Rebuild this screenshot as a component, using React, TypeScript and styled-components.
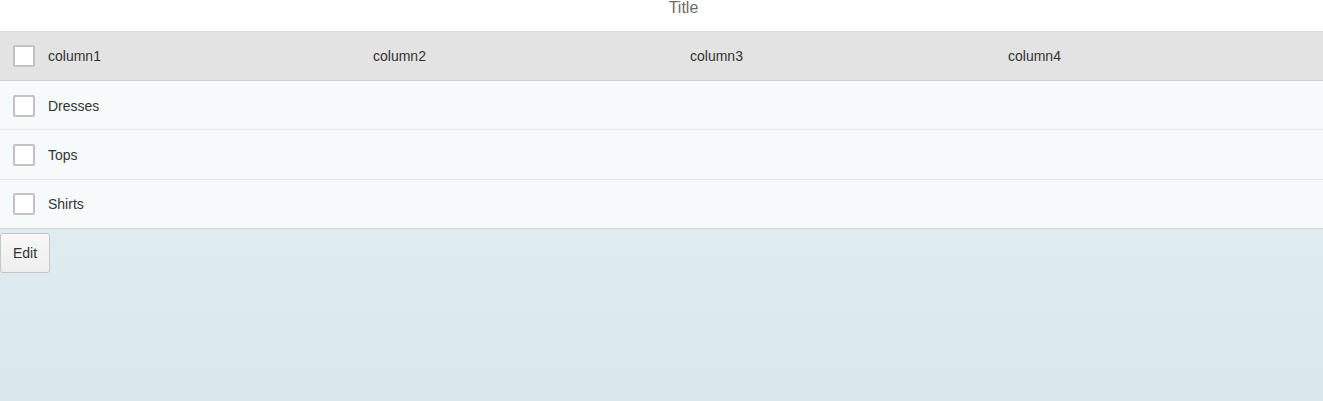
import React from 'react';
import styled, { createGlobalStyle } from 'styled-components';

const GlobalStyle = createGlobalStyle`
  html, body {
    margin: 0;
    padding: 0;
    height: 100%;
  }
  body {
    font-family: "Liberation Sans", Arial, sans-serif;
    background: linear-gradient(to bottom, #ffffff 0, #ffffff 229px, #deecf0 229px, #dbe8ee 401px);
    min-height: 401px;
  }
`;

const Page = styled.div`
  width: 1323px;
`;

const Title = styled.div`
  height: 31px;
  background: #fff;
  text-align: center;
  padding-left: 44px;
  font-size: 16px;
  line-height: 16px;
  color: #6f6a66;
  box-sizing: border-box;
`;

const Table = styled.div`
  display: flex;
  flex-direction: column;
`;

const Row = styled.div<{ $header?: boolean }>`
  display: grid;
  grid-template-columns: 48px 325px 317px 318px 1fr;
  align-items: center;
  height: ${p => (p.$header ? '50px' : '49.33px')};
  box-sizing: border-box;
  background: ${p => (p.$header ? '#e3e3e3' : '#f6fafb')};
  border-top: 1px solid ${p => (p.$header ? '#dcdcdc' : 'transparent')};
  border-bottom: 1px solid ${p => (p.$header ? '#cfcfcf' : '#e1e4e5')};
  font-size: 14px;
  color: #333;

  &:last-child {
    border-bottom-color: #cfd3d4;
  }
`;

const BoxCell = styled.div`
  padding-left: 13px;
  display: flex;
  align-items: center;
`;

const Box = styled.span`
  display: inline-block;
  width: 22px;
  height: 22px;
  box-sizing: border-box;
  border: 2px solid #c3c3c3;
  border-radius: 2px;
  background: #fff;
`;

const Cell = styled.div`
  white-space: nowrap;
`;

const EditButton = styled.button`
  margin-top: 4px;
  width: 50px;
  height: 40px;
  font-family: "Liberation Sans", Arial, sans-serif;
  font-size: 14px;
  color: #333;
  border: 1px solid #c6c6c6;
  border-radius: 3px;
  background: linear-gradient(to bottom, #f7f7f7, #efefef);
  padding: 0;
`;

const rows = ['Dresses', 'Tops', 'Shirts'];

export default function App() {
  return (
    <Page>
      <GlobalStyle />
      <Title>Title</Title>
      <Table>
        <Row $header>
          <BoxCell><Box /></BoxCell>
          <Cell>column1</Cell>
          <Cell>column2</Cell>
          <Cell>column3</Cell>
          <Cell>column4</Cell>
        </Row>
        {rows.map(r => (
          <Row key={r}>
            <BoxCell><Box /></BoxCell>
            <Cell>{r}</Cell>
            <Cell />
            <Cell />
            <Cell />
          </Row>
        ))}
      </Table>
      <EditButton>Edit</EditButton>
    </Page>
  );
}
